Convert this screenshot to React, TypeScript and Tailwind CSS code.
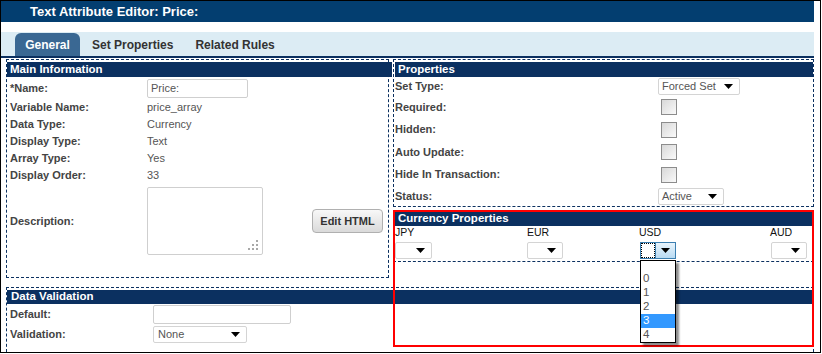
import React from 'react';

const Caret = () => (
  <svg width="9" height="5" viewBox="0 0 9 5" className="shrink-0">
    <path d="M0 0h9L4.5 5z" fill="#000" />
  </svg>
);

const Grip = () => (
  <svg width="11" height="11" viewBox="0 0 11 11" className="absolute right-[3px] bottom-[3px]">
    <rect x="8" y="0" width="2" height="2" fill="#a8a8a8" />
    <rect x="4" y="4" width="2" height="2" fill="#a8a8a8" />
    <rect x="8" y="4" width="2" height="2" fill="#a8a8a8" />
    <rect x="0" y="8" width="2" height="2" fill="#a8a8a8" />
    <rect x="4" y="8" width="2" height="2" fill="#a8a8a8" />
    <rect x="8" y="8" width="2" height="2" fill="#a8a8a8" />
  </svg>
);

const Checkbox = () => (
  <div className="ml-[3px] w-[16px] h-[16px] border border-[#8c8c8c] bg-gradient-to-br from-[#d8d8d8] to-[#fafafa]" />
);

const Header = ({ children, className }: { children: React.ReactNode; className: string }) => (
  <div className={`bg-[#0b3060] text-white font-bold text-[11.5px] pl-[3px] flex items-center shrink-0 ${className}`}>
    {children}
  </div>
);

const leftRows = [
  ['Variable Name:', 'price_array'],
  ['Data Type:', 'Currency'],
  ['Display Type:', 'Text'],
  ['Array Type:', 'Yes'],
  ['Display Order:', '33'],
];

export default function App() {
  return (
    <div className="relative w-[822px] h-[354px] bg-white overflow-hidden font-['Liberation_Sans',Arial,sans-serif]">
      <div className="w-[821px] h-[353px] border border-black flex flex-col overflow-hidden">
        {/* title */}
        <div className="w-[813px] h-[21px] shrink-0 bg-[#033e70] pl-[29px] flex items-center text-[13px] font-bold text-white">
          Text Attribute Editor: Price:
        </div>
        <div className="h-[10px] shrink-0" />

        {/* tabs */}
        <div className="w-[813px] h-[26px] shrink-0 bg-[#dcecf4] border-b-2 border-[#0b3060] flex items-end pl-[14px] text-[12px] font-bold">
          <div className="h-[23px] w-[65px] rounded-t-[6px] bg-[#3a6893] text-white flex items-center justify-center">General</div>
          <div className="h-[23px] ml-[12px] text-[#333] flex items-center">Set Properties</div>
          <div className="h-[23px] ml-[22px] text-[#333] flex items-center">Related Rules</div>
        </div>

        <div className="mt-[1px] pl-[5px] flex flex-col flex-1 min-h-0">
          <div className="flex items-start shrink-0">
            {/* Main Information */}
            <div className="w-[383px] h-[219px] border border-dashed border-[#0b3060] flex flex-col">
              <Header className="mt-[2px] ml-0 mr-[-4px] h-[15px]">Main Information</Header>
              <div className="pl-[3px] flex flex-col text-[11px]">
                <div className="h-[22px] flex items-center">
                  <div className="w-[137px] font-bold text-[#444]">*Name:</div>
                  <div className="w-[101px] h-[19px] border border-[#cfcfcf] rounded-[2px] pl-[3px] flex items-center text-[#555]">Price:</div>
                </div>
                {leftRows.map(([l, v]) => (
                  <div key={l} className="h-[17px] flex items-center">
                    <div className="w-[137px] font-bold text-[#444]">{l}</div>
                    <div className="text-[#555]">{v}</div>
                  </div>
                ))}
                <div className="mt-[3px] flex items-center">
                  <div className="w-[137px] font-bold text-[#444]">Description:</div>
                  <div className="relative w-[116px] h-[68px] border border-[#cfcfcf] rounded-[2px]">
                    <Grip />
                  </div>
                  <div className="ml-[49px] w-[71px] h-[24px] border border-[#b0b0b0] rounded-[4px] bg-gradient-to-b from-[#f8f8f8] to-[#dadada] flex items-center justify-center font-bold text-[11px] text-[#333]">
                    Edit HTML
                  </div>
                </div>
              </div>
            </div>

            {/* right column */}
            <div className="ml-[4px] w-[421px] flex flex-col">
              <div className="h-[148px] border border-dashed border-[#0b3060] flex flex-col">
                <Header className="mt-[2px] ml-[1px] h-[15px]">Properties</Header>
                <div className="pl-[1px] flex flex-col text-[11px]">
                  <div className="h-[19px] flex items-center">
                    <div className="w-[263px] font-bold text-[#444]">Set Type:</div>
                    <div className="w-[82px] h-[17px] border border-[#d4d4d4] rounded-[2px] pl-[3px] pr-[6px] flex items-center justify-between text-[#555]">
                      Forced Set
                      <Caret />
                    </div>
                  </div>
                  <div className="h-[22px] flex items-center">
                    <div className="w-[263px] font-bold text-[#444]">Required:</div>
                    <Checkbox />
                  </div>
                  <div className="h-[23px] flex items-center">
                    <div className="w-[263px] font-bold text-[#444]">Hidden:</div>
                    <Checkbox />
                  </div>
                  <div className="h-[22px] flex items-center">
                    <div className="w-[263px] font-bold text-[#444]">Auto Update:</div>
                    <Checkbox />
                  </div>
                  <div className="h-[23px] flex items-center">
                    <div className="w-[263px] font-bold text-[#444]">Hide In Transaction:</div>
                    <Checkbox />
                  </div>
                  <div className="h-[20px] flex items-center">
                    <div className="w-[263px] font-bold text-[#444]">Status:</div>
                    <div className="w-[66px] h-[17px] border border-[#d4d4d4] rounded-[2px] pl-[3px] pr-[6px] flex items-center justify-between text-[#555]">
                      Active
                      <Caret />
                    </div>
                  </div>
                </div>
              </div>

              {/* Currency Properties */}
              <div className="mt-[3px] h-[52px] border border-dashed border-[#0b3060] flex flex-col">
                <Header className="mt-[1px] ml-[1px] h-[14px]">Currency Properties</Header>
                <div className="pl-[1px] h-[14px] flex items-center text-[10.5px] text-[#111]">
                  <div className="w-[132px]">JPY</div>
                  <div className="w-[112px]">EUR</div>
                  <div className="w-[131px]">USD</div>
                  <div className="flex-1">AUD</div>
                </div>
                <div className="pl-[1px] mt-[2px] h-[17px] flex">
                  <div className="w-[132px]">
                    <div className="w-[37px] h-[17px] border border-[#d4d4d4] rounded-[2px] pr-[6px] flex items-center justify-end"><Caret /></div>
                  </div>
                  <div className="w-[112px]">
                    <div className="w-[36px] h-[17px] border border-[#d4d4d4] rounded-[2px] pr-[6px] flex items-center justify-end"><Caret /></div>
                  </div>
                  <div className="w-[131px]">
                    <div className="ml-[1px] w-[36px] h-[17px] border border-[#3c7fb1] flex">
                      <div className="flex-1 border border-dotted border-black" />
                      <div className="w-[20px] border-l border-[#3c7fb1] bg-gradient-to-b from-[#e8f4fc] to-[#b9dbf3] flex items-center justify-center"><Caret /></div>
                    </div>
                  </div>
                  <div className="flex-1">
                    <div className="ml-[1px] w-[36px] h-[17px] border border-[#d4d4d4] rounded-[2px] pr-[6px] flex items-center justify-end"><Caret /></div>
                  </div>
                </div>
              </div>
            </div>
          </div>

          {/* Data Validation */}
          <div className="mt-[9px] w-[808px] flex-1 border-t border-l border-r border-dashed border-[#0b3060] flex flex-col">
            <Header className="mt-[2px] h-[14px] pl-[4px]">Data Validation</Header>
            <div className="pl-[3px] flex flex-col text-[11px]">
              <div className="h-[21px] flex items-center">
                <div className="w-[143px] font-bold text-[#444]">Default:</div>
                <div className="w-[138px] h-[19px] border border-[#cfcfcf] rounded-[2px]" />
              </div>
              <div className="h-[19px] flex items-center">
                <div className="w-[143px] font-bold text-[#444]">Validation:</div>
                <div className="w-[94px] h-[17px] border border-[#d4d4d4] rounded-[2px] pl-[4px] pr-[6px] flex items-center justify-between text-[#555]">
                  None
                  <Caret />
                </div>
              </div>
            </div>
          </div>
        </div>
      </div>

      {/* red highlight */}
      <div className="absolute left-[393px] top-[210px] w-[421px] h-[137px] border-2 border-[#ff0000]" />

      {/* open dropdown list */}
      <div className="absolute left-[640px] top-[260px] w-[36px] h-[83px] border border-black bg-white shadow-[3px_3px_2px_rgba(0,0,0,0.45)] flex flex-col text-[11.5px] text-[#555]">
        <div className="h-[11px]" />
        {['0', '1', '2', '3', '4'].map((n) => (
          <div key={n} className={`h-[14px] pl-[2px] flex items-center ${n === '3' ? 'bg-[#3399ff] text-white' : ''}`}>
            {n}
          </div>
        ))}
      </div>
    </div>
  );
}
